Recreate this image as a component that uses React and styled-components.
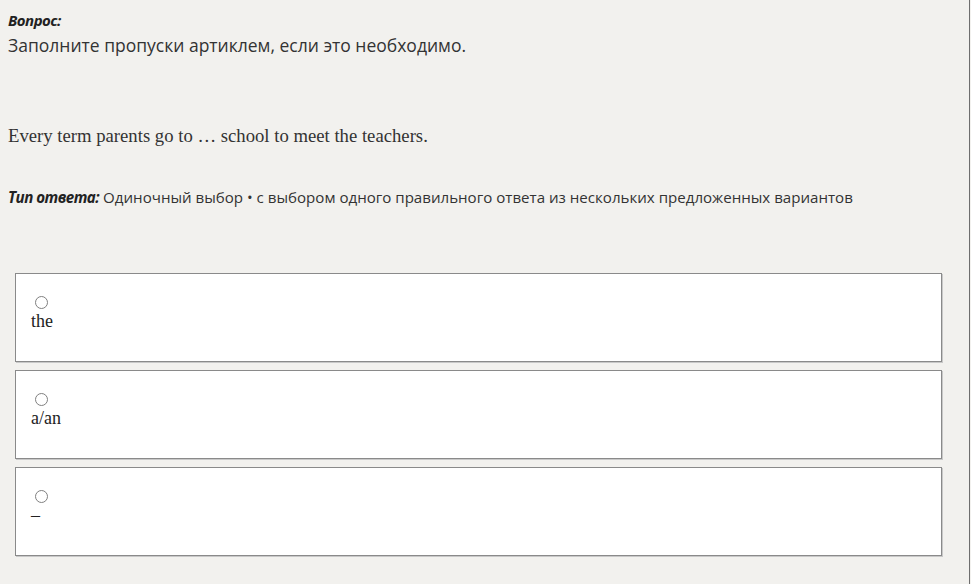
import React from "react";
import styled, { createGlobalStyle } from "styled-components";

const Global = createGlobalStyle`
  html, body {
    margin: 0;
    padding: 0;
    background: #f2f1ee;
  }
`;

const Page = styled.div`
  width: 970px;
  height: 584px;
  box-sizing: border-box;
  border-right: 1px solid #6e6e6e;
  padding: 10px 0 0 8px;
  color: #333;
`;

const Label = styled.div`
  font-family: "Open Sans", "Noto Sans", sans-serif;
  font-size: 15px;
  font-weight: 700;
  font-style: italic;
  letter-spacing: -0.5px;
  line-height: 20px;
  color: #222;
`;

const Prompt = styled.div`
  font-family: "Open Sans", "Noto Sans", sans-serif;
  font-size: 17.5px;
  line-height: 30px;
  color: #333;
`;

const Sentence = styled.p`
  margin: 64px 0 0;
  font-family: "Liberation Serif", serif;
  font-size: 18.7px;
  line-height: 24px;
  color: #333;
`;

const AnswerType = styled.p`
  margin: 37px 0 0;
  font-family: "Open Sans", "Noto Sans", sans-serif;
  font-size: 15.1px;
  line-height: 24px;
  color: #333;
`;

const TypeLabel = styled.span`
  font-weight: 700;
  font-style: italic;
  letter-spacing: -0.5px;
  color: #222;
`;

const Options = styled.div`
  display: flex;
  flex-direction: column;
  gap: 8px;
  margin: 64px 0 0 7px;
  width: 927px;
`;

const Option = styled.label`
  display: block;
  box-sizing: border-box;
  height: 89px;
  background: #fff;
  border: 1px solid #8a8a8a;
  box-shadow: 1px 1px 0 #c8c8c8;
  padding: 22px 0 0 15px;
`;

const Radio = styled.span`
  display: block;
  width: 11px;
  height: 11px;
  margin-left: 4px;
  border: 1.3px solid #808080;
  border-radius: 50%;
`;

const OptionText = styled.div`
  font-family: "Liberation Serif", serif;
  font-size: 18px;
  line-height: 24px;
  color: #222;
`;

const options = ["the", "a/an", "–"];

export default function App() {
  return (
    <>
      <Global />
      <Page>
        <Label>Вопрос:</Label>
        <Prompt>Заполните пропуски артиклем, если это необходимо.</Prompt>
        <Sentence>Every term parents go to … school to meet the teachers.</Sentence>
        <AnswerType>
          <TypeLabel>Тип ответа:</TypeLabel> Одиночный выбор • с выбором одного
          правильного ответа из нескольких предложенных вариантов
        </AnswerType>
        <Options>
          {options.map((o) => (
            <Option key={o}>
              <Radio />
              <OptionText>{o}</OptionText>
            </Option>
          ))}
        </Options>
      </Page>
    </>
  );
}
